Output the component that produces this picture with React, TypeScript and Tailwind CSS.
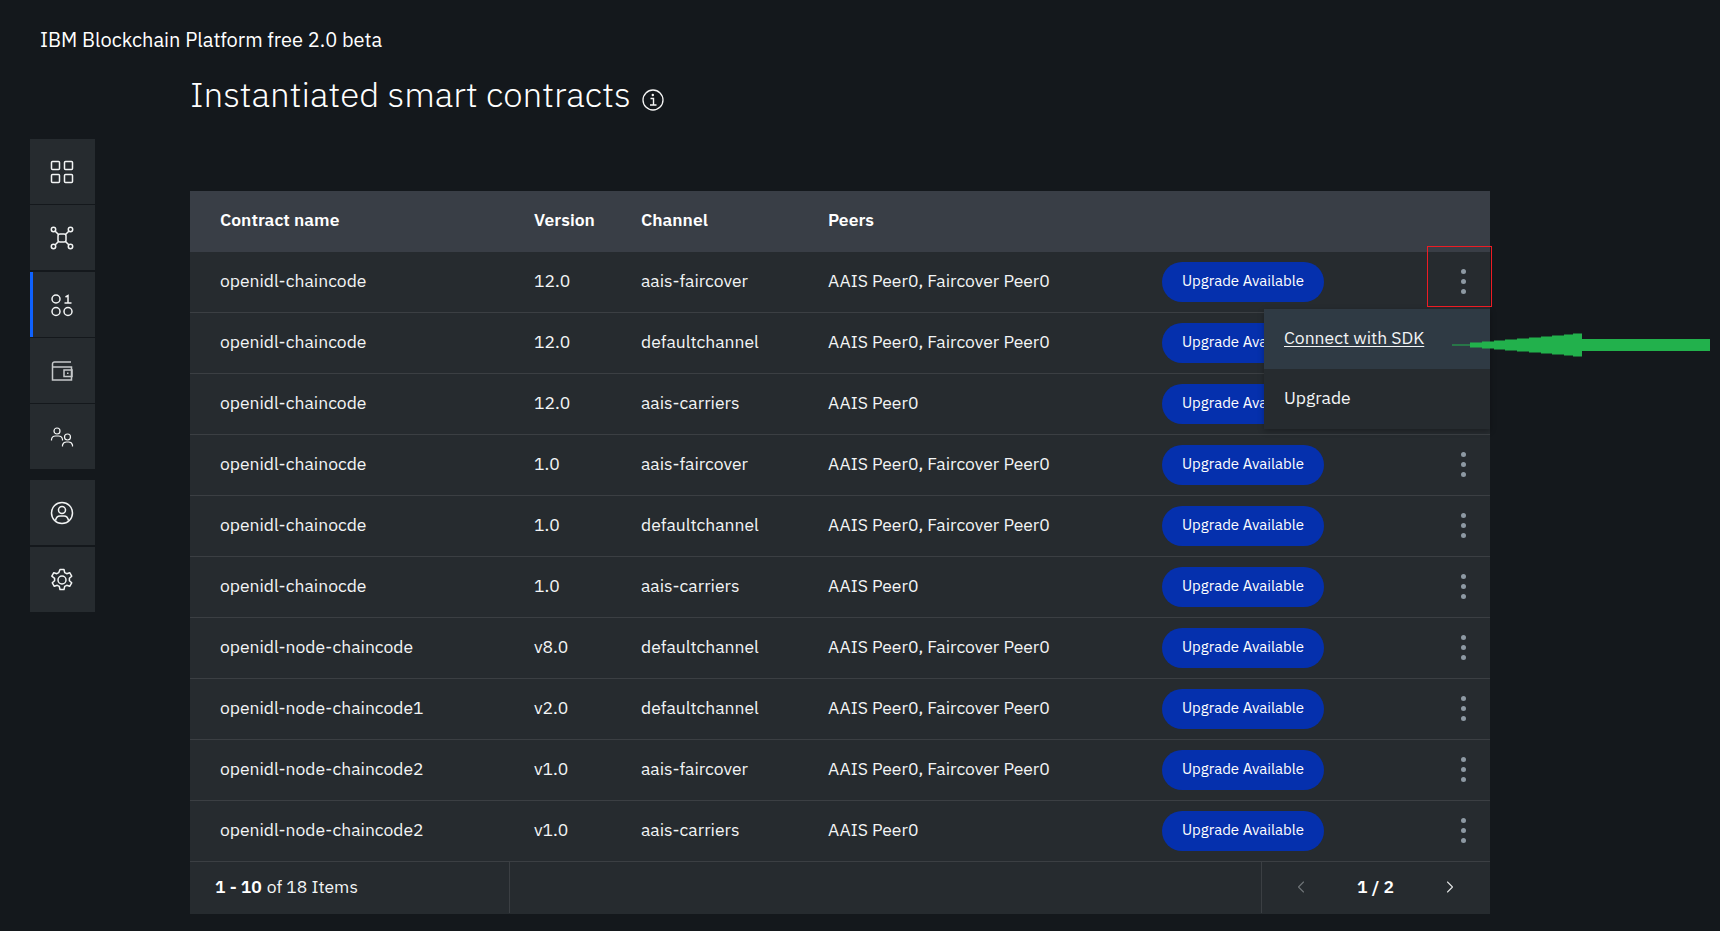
import { ChevronLeft, ChevronRight } from 'lucide-react'

const rows = [
  ['openidl-chaincode', '12.0', 'aais-faircover', 'AAIS Peer0, Faircover Peer0'],
  ['openidl-chaincode', '12.0', 'defaultchannel', 'AAIS Peer0, Faircover Peer0'],
  ['openidl-chaincode', '12.0', 'aais-carriers', 'AAIS Peer0'],
  ['openidl-chainocde', '1.0', 'aais-faircover', 'AAIS Peer0, Faircover Peer0'],
  ['openidl-chainocde', '1.0', 'defaultchannel', 'AAIS Peer0, Faircover Peer0'],
  ['openidl-chainocde', '1.0', 'aais-carriers', 'AAIS Peer0'],
  ['openidl-node-chaincode', 'v8.0', 'defaultchannel', 'AAIS Peer0, Faircover Peer0'],
  ['openidl-node-chaincode1', 'v2.0', 'defaultchannel', 'AAIS Peer0, Faircover Peer0'],
  ['openidl-node-chaincode2', 'v1.0', 'aais-faircover', 'AAIS Peer0, Faircover Peer0'],
  ['openidl-node-chaincode2', 'v1.0', 'aais-carriers', 'AAIS Peer0'],
]

const cols = 'grid grid-cols-[314px_107px_187px_334px_1fr] items-center pl-[30px]'

function SideIcon({ children }: { children: React.ReactNode }) {
  return (
    <svg viewBox="0 0 24 24" fill="none" stroke="#f2f4f4" strokeWidth="1.5" className="h-6 w-6">
      {children}
    </svg>
  )
}

function SideItem({ children, active, className }: { children: React.ReactNode; active?: boolean; className?: string }) {
  return (
    <div className={`flex h-[65px] w-[65px] items-center justify-center bg-[#262b2f] ${active ? 'border-l-[3px] border-[#0f62fe] pr-[5px]' : 'pr-[2px]'} ${className ?? ''}`}>
      {children}
    </div>
  )
}

function Dots() {
  return (
    <div className="mb-[2px] flex flex-col gap-[5px]">
      <span className="h-[5px] w-[5px] rounded-full bg-[#8d99a3]" />
      <span className="h-[5px] w-[5px] rounded-full bg-[#8d99a3]" />
      <span className="h-[5px] w-[5px] rounded-full bg-[#8d99a3]" />
    </div>
  )
}

export default function App() {
  return (
    <div className="relative h-[931px] overflow-hidden bg-[#14181c] font-['IBM_Plex_Sans','Roboto',sans-serif] text-[#f3f5f6]">
      <div className="pl-10 pt-[28px] text-[20px] leading-[24px] text-white">IBM Blockchain Platform free 2.0 beta</div>
      <div className="flex">
        <nav className="ml-[30px] mt-[87px] flex w-[65px] flex-col">
          <SideItem>
            <SideIcon>
              <rect x="1.5" y="1.5" width="8" height="8" rx="1" />
              <rect x="14.5" y="1.5" width="8" height="8" rx="1" />
              <rect x="1.5" y="14.5" width="8" height="8" rx="1" />
              <rect x="14.5" y="14.5" width="8" height="8" rx="1" />
            </SideIcon>
          </SideItem>
          <SideItem className="mt-px">
            <SideIcon>
              <rect x="8" y="8" width="8" height="8" rx="2" />
              <circle cx="3.5" cy="3.5" r="2.2" />
              <circle cx="20.5" cy="3.5" r="2.2" />
              <circle cx="3.5" cy="20.5" r="2.2" />
              <circle cx="20.5" cy="20.5" r="2.2" />
              <path d="M5 5l3.5 3.5M19 5l-3.5 3.5M5 19l3.5-3.5M19 19l-3.5-3.5" />
            </SideIcon>
          </SideItem>
          <SideItem active className="mt-[2px]">
            <SideIcon>
              <circle cx="6" cy="6" r="4" />
              <circle cx="6" cy="18.5" r="4" />
              <circle cx="18" cy="18.5" r="4" />
              <path d="M15.5 4l2.5-1.5V10M14.5 10h7" />
            </SideIcon>
          </SideItem>
          <SideItem className="mt-px">
            <SideIcon>
              <path d="M21 3H4.5A2 2 0 0 0 2.500 5v16h19V8H3" stroke="#c6c9cb" />
              <rect x="14" y="11" width="8" height="6.500" stroke="#c6c9cb" />
              <path d="M17 14.200h1.500" stroke="#c6c9cb" />
            </SideIcon>
          </SideItem>
          <SideItem className="mt-px">
            <SideIcon>
              <circle cx="7" cy="6" r="3" strokeWidth="1.200" />
              <path d="M1.500 15.500v-1a4 4 0 0 1 4-3.500h3a4 4 0 0 1 4 3.500v1" strokeWidth="1.200" />
              <circle cx="17.500" cy="12" r="3" strokeWidth="1.200" />
              <path d="M12.500 21.500v-1.500a4 4 0 0 1 4-3h2a4 4 0 0 1 4 3v1.500" strokeWidth="1.200" />
            </SideIcon>
          </SideItem>
          <SideItem className="mt-[11px]">
            <SideIcon>
              <circle cx="12" cy="12" r="10.500" />
              <circle cx="12" cy="9" r="3.500" />
              <path d="M5.500 19.500c.500-2.800 2.500-4.500 4.500-4.500h4c2 0 4 1.700 4.500 4.500" />
            </SideIcon>
          </SideItem>
          <SideItem className="mt-[2px]">
            <SideIcon>
              <circle cx="12" cy="12" r="4" />
              <path d="M10 1.500h4l.7 3.100 2 1.100 3-1 2 3.500-2.300 2.100v2.400l2.300 2.100-2 3.500-3-1-2 1.100-.7 3.100h-4l-.7-3.100-2-1.100-3 1-2-3.500 2.300-2.100v-2.400L1.800 8.200l2-3.500 3 1 2-1.100z" strokeLinejoin="round" />
            </SideIcon>
          </SideItem>
        </nav>

        <main className="ml-[95px] w-[1300px]">
          <h1 className="mt-[20px] flex h-[44px] items-center text-[35px] font-light leading-[44px] text-white">
            Instantiated smart contracts
            <svg viewBox="0 0 22 22" fill="none" stroke="#f5f5f5" className="ml-[11px] mt-[11px] h-[22px] w-[22px]">
              <circle cx="11" cy="11" r="10" strokeWidth="1.300" />
              <path d="M8.500 9.500h3V16M8 16h6.500" strokeWidth="1.400" />
              <circle cx="10.800" cy="6" r="1.200" fill="#f5f5f5" stroke="none" />
            </svg>
          </h1>

          <div className="relative mt-[75px] w-[1300px] text-[17.5px] leading-[20px]">
            <div className={`${cols} h-[61px] bg-[#393e46] pb-[4px] font-semibold text-white`}>
              <span>Contract name</span>
              <span>Version</span>
              <span>Channel</span>
              <span>Peers</span>
            </div>
            {rows.map((row, i) => (
              <div key={i} className={`${cols} h-[61px] border-b border-[#3b3f43] bg-[#262b2f]`}>
                <span className="pb-[2px]">{row[0]}</span>
                <span className="pb-[2px]">{row[1]}</span>
                <span className="pb-[2px]">{row[2]}</span>
                <span className="pb-[2px]">{row[3]}</span>
                <div className="flex items-center justify-between pr-[24px]">
                  <span className="flex h-[40px] w-[162px] items-center justify-center rounded-full bg-[#0530ad] pb-[2px] text-[15px] text-white">
                    Upgrade Available
                  </span>
                  <Dots />
                </div>
              </div>
            ))}
            <div className="flex h-[52px] bg-[#262b2f] pb-px">
              <div className="flex w-[320px] items-center border-r border-[#3b3f43] pb-[2px] pl-[25px] text-[#f3f5f6]">
                <b className="mr-[5px] font-semibold text-white">1 - 10</b> of 18 Items
              </div>
              <div className="ml-auto flex w-[229px] items-center justify-between border-l border-[#3b3f43] pb-[2px] pl-[29px] pr-[30px]">
                <ChevronLeft className="h-5 w-5 text-[#6f7478]" strokeWidth={1.300} />
                <span className="font-semibold text-white">1 / 2</span>
                <ChevronRight className="h-5 w-5 text-[#e0e2e3]" strokeWidth={1.300} />
              </div>
            </div>

            {/* open overflow menu */}
            <div className="absolute left-[1074px] top-[118px] w-[226px] bg-[#262b2f] shadow-[0_2px_6px_rgba(0,0,0,0.3)]">
              <div className="flex h-[60px] items-center bg-[#2f3a44] pb-[2px] pl-[20px]">
                <span className="underline underline-offset-2">Connect with SDK</span>
              </div>
              <div className="flex h-[60px] items-center pb-[2px] pl-[20px]">Upgrade</div>
            </div>
            {/* red highlight around the first row's menu */}
            <div className="absolute left-[1237px] top-[55px] h-[61px] w-[65px] border border-[#ed1c24]" />
          </div>
        </main>
      </div>

      {/* green annotation arrow */}
      <svg viewBox="0 0 260 25" className="absolute left-[1452px] top-[333px] h-[25px] w-[260px]">
        <polygon
          fill="#22b14c"
          points="0,11.500 18,11.500 18,9.500 30,9.500 30,8.500 42,8.500 42,7.500 53,7.500 53,6.500 65,6.500 65,5.500 77,5.500 77,4.500 89,4.500 89,3.500 100,3.500 100,2.500 112,2.500 112,1.500 121,1.500 121,0.500 130,0.500 130,6 258,6 258,18 130,18 130,23.500 121,23.500 121,22.500 112,22.500 112,21.500 100,21.500 100,20.500 89,20.500 89,19.500 77,19.500 77,18.500 65,18.500 65,17.500 53,17.500 53,16.500 42,16.500 42,15.500 30,15.500 30,14.500 18,14.500 18,12.500 0,12.500"
        />
      </svg>
    </div>
  )
}
